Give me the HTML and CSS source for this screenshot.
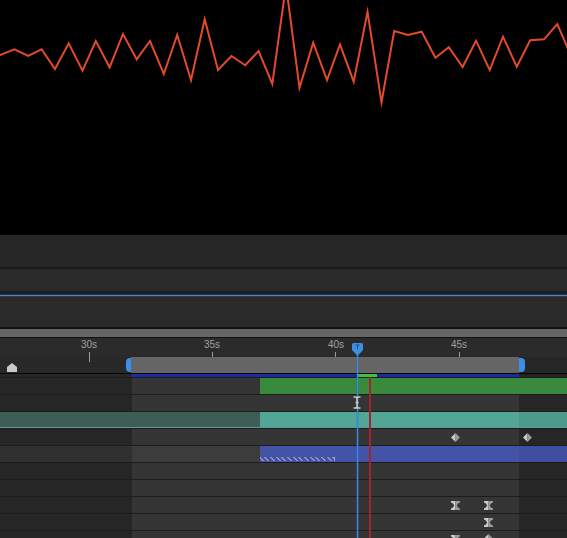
FILE: index.html
```html
<!DOCTYPE html>
<html>
<head>
<meta charset="utf-8">
<title>Timeline</title>
<link rel="stylesheet" href="styles.css">
</head>
<body>
<div class="app">
  <div class="graph">
    <svg class="wave" width="567" height="235" viewBox="0 0 567 235">
      <polyline points="-4,57 0,55 14.5,49.3 28.2,56 41.6,49.3 55,69 68.7,43.3 82.5,70.7 95.8,41 109.6,67.3 123,34 136.7,59.3 150,41 163.8,74 177.2,35 191,80 204.7,19.3 218,70 231.5,56 245.2,65.3 258.6,51 272.3,84 286,-15 299.5,87.7 313.2,42.7 327,80 340,44.3 353.7,81.7 367.5,11.7 381.5,102.3 394.2,31 408,35 421.7,31.7 435.4,57.7 448.8,47.3 462.6,67 476,40.7 489.7,70 503,36.7 516.8,66.7 530.2,40.3 544,39.3 557.3,24 572,58" />
    </svg>
  </div>
  <div class="strip s-a"></div>
  <div class="strip s-b"></div>
  <div class="strip s-line"></div>
  <div class="strip s-c"></div>
  <div class="strip s-dark"></div>
  <div class="strip s-blue"></div>
  <div class="strip s-d"></div>
  <div class="strip s-line2"></div>
  <div class="strip s-scroll"></div>
  <div class="strip s-line3"></div>

  <div class="timeline">
    <div class="ruler">
      <span class="label" style="left:81px">30s</span>
      <span class="tick long" style="left:89px"></span>
      <span class="label" style="left:204px">35s</span>
      <span class="tick" style="left:212px"></span>
      <span class="label" style="left:328px">40s</span>
      <span class="tick" style="left:335px"></span>
      <span class="label" style="left:451px">45s</span>
      <span class="tick" style="left:459px"></span>
    </div>

    <div class="workarea">
      <div class="wa-left">
        <svg class="home" width="10" height="9" viewBox="0 0 10 9"><path d="M0 4 L5 0 L10 4 V9 H0 Z"/></svg>
      </div>
      <div class="wa-handle left"></div>
      <div class="wa-bar"></div>
      <div class="wa-handle right"></div>
      <div class="wa-right"></div>
    </div>
    <div class="wa-line"></div>
    <div class="render">
      <div class="r-left"></div>
      <div class="r-blue b1"></div>
      <div class="r-green"></div>
      <div class="r-blue b2"></div>
      <div class="r-right"></div>
    </div>

    <div class="rows">
      <div class="row"><div class="bar green"></div></div>
      <div class="row">
        <svg class="ibeam" width="8" height="13" viewBox="0 0 8 13"><path d="M0.5 1 H2.5 Q4 1 4 2.5 V10.5 Q4 12 2.5 12 H0.5 M7.5 1 H5.5 Q4 1 4 2.5 M4 10.5 Q4 12 5.5 12 H7.5 M2.5 6.5 H5.5"/></svg>
      </div>
      <div class="row"><div class="bar teal"></div></div>
      <div class="row">
        <svg class="kf" style="left:451px" width="9" height="9" viewBox="0 0 9 9"><path class="kl" d="M4.5 0 L0 4.5 L4.5 9 Z"/><path class="kr" d="M4.5 0 L9 4.5 L4.5 9 Z"/></svg>
        <svg class="kf" style="left:523px" width="9" height="9" viewBox="0 0 9 9"><path class="kl" d="M4.5 0 L0 4.5 L4.5 9 Z"/><path class="kr" d="M4.5 0 L9 4.5 L4.5 9 Z"/></svg>
      </div>
      <div class="row sel"><div class="bar blue"><div class="hatch"></div></div></div>
      <div class="row"></div>
      <div class="row"></div>
      <div class="row">
        <svg class="hg" style="left:451px" width="9" height="9" viewBox="0 0 9 9"><path class="kl" d="M0 0 H4.5 V9 H0 V7.5 C2.5 6.5 3 5 3 4.5 C3 4 2.5 2.5 0 1.5 Z"/><path class="kr" d="M9 0 H4.5 V9 H9 V7.5 C6.5 6.5 6 5 6 4.5 C6 4 6.5 2.5 9 1.5 Z"/></svg>
        <svg class="hg" style="left:484px" width="9" height="9" viewBox="0 0 9 9"><path class="kl" d="M0 0 H4.5 V9 H0 V7.5 C2.5 6.5 3 5 3 4.5 C3 4 2.5 2.5 0 1.5 Z"/><path class="kr" d="M9 0 H4.5 V9 H9 V7.5 C6.5 6.5 6 5 6 4.5 C6 4 6.5 2.5 9 1.5 Z"/></svg>
      </div>
      <div class="row">
        <svg class="hg" style="left:484px" width="9" height="9" viewBox="0 0 9 9"><path class="kl" d="M0 0 H4.5 V9 H0 V7.5 C2.5 6.5 3 5 3 4.5 C3 4 2.5 2.5 0 1.5 Z"/><path class="kr" d="M9 0 H4.5 V9 H9 V7.5 C6.5 6.5 6 5 6 4.5 C6 4 6.5 2.5 9 1.5 Z"/></svg>
      </div>
      <div class="row">
        <svg class="hg" style="left:451px" width="9" height="9" viewBox="0 0 9 9"><path class="kl" d="M0 0 H4.5 V9 H0 V7.5 C2.5 6.5 3 5 3 4.5 C3 4 2.5 2.5 0 1.5 Z"/><path class="kr" d="M9 0 H4.5 V9 H9 V7.5 C6.5 6.5 6 5 6 4.5 C6 4 6.5 2.5 9 1.5 Z"/></svg>
        <svg class="kf low" style="left:484px" width="9" height="9" viewBox="0 0 9 9"><path class="kl" d="M4.5 0 L0 4.5 L4.5 9 Z"/><path class="kr" d="M4.5 0 L9 4.5 L4.5 9 Z"/></svg>
      </div>
    </div>

    <div class="playhead">
      <svg width="11" height="13" viewBox="0 0 11 13"><path class="ph" d="M1.5 0 H9.5 Q11 0 11 1.5 V7 L5.5 13 L0 7 V1.5 Q0 0 1.5 0 Z"/><path class="pt" d="M3.5 2 H7.5 M5.5 2 V6"/></svg>
    </div>
    <div class="phline"></div>
    <div class="redline"></div>
  </div>
</div>
</body>
</html>
```

FILE: styles.css
```css
* { box-sizing: border-box; }
html, body { margin: 0; padding: 0; background: #000; }
body { width: 567px; height: 538px; overflow: hidden; font-family: "Liberation Sans", Arial, sans-serif; }

.app { display: flex; flex-direction: column; width: 567px; height: 538px; overflow: hidden; }

.graph { height: 235px; background: #000; flex: none; }
.wave { display: block; }
.wave polyline { fill: none; stroke: #e34a2b; stroke-width: 2; stroke-linejoin: miter; stroke-miterlimit: 10; }

.strip { flex: none; width: 100%; }
.s-a { height: 29px; background: #262626; }
.s-b { height: 3px; background: #282828; }
.s-line { height: 2px; background: #1b1b1b; }
.s-c { height: 22px; background: #2a2a2a; }
.s-dark { height: 4px; background: #1c1e21; box-shadow: inset 0 -1px 0 #22344a; }
.s-blue { height: 1px; background: #4a86d0; }
.s-d { height: 31px; background: #2a2a2a; box-shadow: inset 0 1px 0 #2c3a4c; }
.s-line2 { height: 2px; background: #111; }
.s-scroll { height: 8px; background: #666; }
.s-line3 { height: 1px; background: #121212; }

.timeline { position: relative; flex: 1; background: #262626; }

.ruler { position: relative; height: 19px; background: #2b2b2b; }
.label { position: absolute; top: 2px; font-size: 10px; line-height: 10px; color: #a0a0a0; }
.tick { position: absolute; top: 14px; width: 1px; height: 5px; background: #9a9a9a; }
.tick.long { height: 10px; }

.workarea { display: flex; height: 16px; }
.wa-left { width: 126px; background: #282828; display: flex; align-items: flex-end; padding-left: 7px; padding-bottom: 1px; }
.home { display: block; fill: #c9c9c9; }
.wa-handle { width: 5px; background: #3a8fe8; position: relative; z-index: 1; }
.wa-handle.left { border-radius: 4px 0 0 4px; margin: 1px 0; }
.wa-handle.right { width: 6px; border-radius: 0 4px 4px 0; margin: 1px 0; }
.wa-bar { width: 388px; background: #656565; position: relative; z-index: 1; }
.wa-right { flex: 1; background: #262626; }

.wa-line { height: 1px; background: #050505; }

.render { display: flex; height: 3px; }
.r-left { width: 131px; background: #262626; }
.r-blue.b1 { width: 227px; background: #1b2a9e; }
.r-green { width: 19px; background: #3fc23e; }
.r-blue.b2 { width: 142px; background: #1b2a9e; }
.r-right { flex: 1; background: #232323; }

.rows { display: flex; flex-direction: column; }
.row {
  position: relative;
  height: 17px;
  border-top: 1px solid #1c1c1c;
  background: linear-gradient(to right, #262626 0 132px, #353535 132px 519px, #262626 519px);
}
.row.sel { background: linear-gradient(to right, #303030 0 132px, #3c3c3c 132px 260px, #2a2a2a 260px); }

.bar { height: 16px; margin-left: 260px; }
.bar.green { background: #3a8a3d; }
.bar.teal {
  margin-left: 0;
  background: linear-gradient(to right, #3e5d57 0 260px, #53a696 260px 519px, #4c9a8b 519px);
  box-shadow: inset 0 -1px 0 #5f9d92;
}
.bar.blue {
  background: linear-gradient(to right, #4353a5 0 259px, #3f4e9e 259px);
  display: flex; align-items: flex-end; padding-bottom: 1px;
}
.hatch {
  width: 75px; height: 4px;
  border-right: 1px solid #9aa2cf;
  background:
    repeating-linear-gradient(45deg, transparent 0 1.5px, #8c95c9 1.5px 3px, transparent 3px 4px);
}

.ibeam { position: absolute; left: 353px; top: 1px; fill: none; stroke: #c8c8c8; stroke-width: 1.6; z-index: 3; }
.kf { position: absolute; top: 4px; }
.kf.low { top: 3px; }
.hg { position: absolute; top: 4px; }
.kl { fill: #cbcbcb; }
.kr { fill: #9a9a9a; }

.playhead { position: absolute; left: 352px; top: 5px; width: 11px; height: 13px; z-index: 2; }
.playhead svg { display: block; }
.ph { fill: #3d8fe2; }
.pt { stroke: #1f4f86; stroke-width: 1; fill: none; }
.phline {
  position: absolute; left: 357px; top: 15px; bottom: 0; width: 1px;
  background: #3a8ae4; z-index: 2;
  box-shadow: 1px 0 0 rgba(40, 120, 220, 0.35), -1px 0 0 rgba(40, 120, 220, 0.25);
}
.redline { position: absolute; left: 369px; top: 39px; bottom: 0; width: 2px; background: #a5232b; z-index: 2; }
```
